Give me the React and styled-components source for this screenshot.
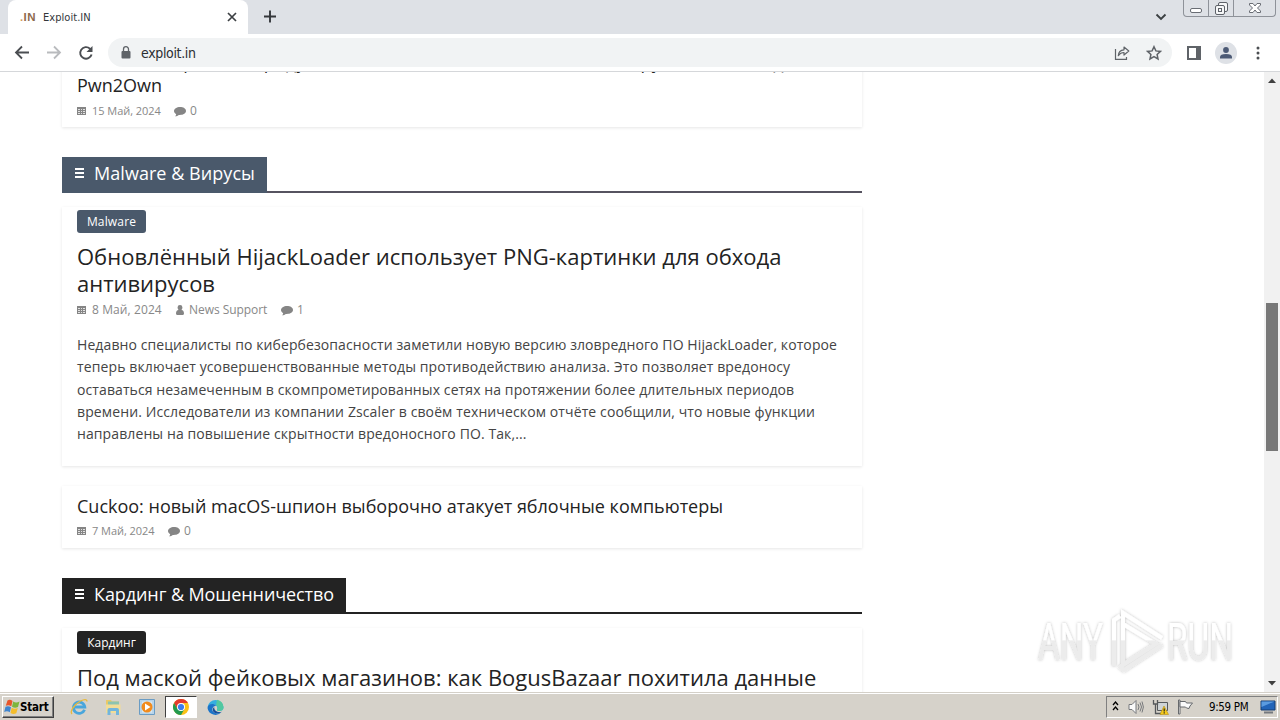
import React from "react";
import styled, { createGlobalStyle } from "styled-components";

const PALETTE = {
  frame: "#dee1e6",
  icon: "#5f6368",
  omnibox: "#f1f3f4",
  malware: "#4a596b",
  malwareLine: "#565360",
  carding: "#232323",
  text: "#232323",
  body: "#444444",
  meta: "#888888",
  taskbar: "#d6d2ca",
};

const UI_FONT = `"DejaVu Sans Condensed", "DejaVu Sans", sans-serif`;

const GlobalStyle = createGlobalStyle`
  * {
    box-sizing: border-box;
  }

  body {
    margin: 0;
    overflow: hidden;
    background: #fff;
  }

  h2, h3, p {
    margin: 0;
    font-weight: 400;
  }

  svg {
    display: block;
    flex: none;
  }
`;

const Screen = styled.div`
  position: relative;
  width: 1280px;
  height: 720px;
  display: flex;
  flex-direction: column;
  overflow: hidden;
  font-family: "Open Sans", "Noto Sans", sans-serif;
`;

/* browser frame */

const TabStrip = styled.div`
  height: 34px;
  flex: none;
  display: flex;
  align-items: flex-start;
  background: ${PALETTE.frame};
`;

const Tab = styled.div`
  width: 240px;
  height: 34px;
  margin-left: 8px;
  padding: 0 11px 0 12px;
  display: flex;
  align-items: center;
  border-radius: 8px 8px 0 0;
  background: #fff;
`;

const Favicon = styled.span`
  width: 23px;
  font: bold 11.5px/34px "Liberation Sans", sans-serif;
  letter-spacing: 0.4px;
  color: #8d6a4c;

  i {
    font-style: normal;
    color: #d49a5a;
  }
`;

const TabTitle = styled.span`
  flex: 1;
  padding-top: 1px;
  font: 11px/34px ${UI_FONT};
  letter-spacing: 0.05px;
  color: #33363a;
`;

const NewTab = styled.div`
  padding: 10px 0 0 16px;
`;

const TabSearch = styled.div`
  margin-left: auto;
  padding: 12px 16px 0 0;
`;

const WindowButtons = styled.div`
  width: 93px;
  height: 17px;
  margin-right: 4px;
  display: flex;
  border: 1px solid #8e9299;
  border-top: 0;
  border-radius: 0 0 4px 4px;
`;

const WindowButton = styled.div`
  width: ${({ $width }) => $width}px;
  height: 16px;
  display: flex;
  justify-content: center;
  border-left: ${({ $first }) => ($first ? 0 : "1px solid #8e9299")};
`;

const Toolbar = styled.div`
  height: 38px;
  flex: none;
  padding: 0 14px 0 14px;
  display: flex;
  align-items: center;
  border-bottom: 1px solid #d5d7da;
  background: #fff;
`;

const NavButtons = styled.div`
  width: 94px;
  display: flex;
  gap: 16px;
`;

const Omnibox = styled.div`
  width: 1064px;
  height: 29px;
  padding: 0 10px;
  display: flex;
  align-items: center;
  border-radius: 15px;
  background: ${PALETTE.omnibox};
`;

const Url = styled.span`
  flex: 1;
  margin-left: 7px;
  font: 14px/18px ${UI_FONT};
  letter-spacing: -0.35px;
  color: #2b2e32;
`;

const OmniboxActions = styled.div`
  display: flex;
  gap: 16px;
`;

const ToolbarActions = styled.div`
  margin-left: auto;
  display: flex;
  align-items: center;
`;

const Avatar = styled.div`
  width: 22px;
  height: 22px;
  margin: 0 13px 0 14px;
  display: flex;
  justify-content: center;
  align-items: center;
  border-radius: 50%;
  background: #dee1e6;
`;

/* page */

const Viewport = styled.div`
  height: 620px;
  flex: none;
  display: flex;
  justify-content: space-between;
  overflow: hidden;
  background: #fff;
`;

const Content = styled.main`
  width: 800px;
  margin-left: 62px;
`;

const Card = styled.article`
  height: ${({ $height }) => $height}px;
  margin-top: ${({ $top }) => $top}px;
  padding: ${({ $pad }) => $pad}px 15px 0;
  background: #fff;
  box-shadow: 0 1px 3px 0 rgba(0, 0, 0, 0.1);
`;

const SmallTitle = styled.h3`
  font-size: 18px;
  line-height: ${({ $leading }) => $leading || 24}px;
  white-space: nowrap;
  color: ${PALETTE.text};
`;

const BigTitle = styled.h3`
  margin-top: 10px;
  font-size: 22px;
  line-height: 27px;
  white-space: nowrap;
  color: ${PALETTE.text};
`;

const Line = styled.span`
  display: block;
  letter-spacing: ${({ $spacing }) => $spacing || 0}px;
`;

const Meta = styled.div`
  height: ${({ $height }) => $height || 16}px;
  display: flex;
  align-items: center;
  font-size: 12px;
  color: ${PALETTE.meta};
`;

const MetaItem = styled.span`
  width: ${({ $width }) => $width}px;
  display: flex;
  align-items: center;
  gap: ${({ $gap }) => $gap || 5}px;
  font-size: ${({ $size }) => $size || 12}px;
  line-height: 16px;
  letter-spacing: ${({ $spacing }) => $spacing || 0}px;
  white-space: nowrap;
`;

const Excerpt = styled.p`
  margin-top: 11px;
  font-size: 14px;
  line-height: 22.3px;
  white-space: nowrap;
  color: ${PALETTE.body};
`;

const SectionHeader = styled.h2`
  height: 36px;
  margin-top: 30px;
  display: flex;
  border-bottom: 2px solid ${({ $line }) => $line};
`;

const SectionLabel = styled.span`
  width: ${({ $width }) => $width}px;
  height: 36px;
  padding: 0 0 4px 12px;
  display: flex;
  align-items: center;
  gap: 9px;
  font-size: 18px;
  line-height: 24px;
  letter-spacing: ${({ $spacing }) => $spacing || 0}px;
  white-space: nowrap;
  color: #fff;
  background: ${({ $color }) => $color};
`;

const Badge = styled.span`
  width: 69px;
  height: 23px;
  display: block;
  border-radius: 3px;
  font-size: 12px;
  line-height: 23px;
  text-align: center;
  letter-spacing: ${({ $spacing }) => $spacing || 0}px;
  color: #fff;
  background: ${({ $color }) => $color};
`;

const Scrollbar = styled.div`
  width: 16px;
  height: 620px;
  padding: 6px 2px;
  display: flex;
  flex-direction: column;
  align-items: center;
  background: #f1f1f1;
`;

const Thumb = styled.div`
  width: 12px;
  height: 148px;
  margin: 220px 0 auto;
  background: #787878;
`;

const Watermark = styled.svg`
  position: absolute;
  left: 1030px;
  top: 600px;
`;

/* taskbar */

const Taskbar = styled.div`
  height: 28px;
  flex: none;
  padding: 2px 2px 1px;
  display: flex;
  align-items: center;
  border-top: 1px solid #d4d0c8;
  box-shadow: inset 0 1px 0 #fff;
  background: ${PALETTE.taskbar};
`;

const StartButton = styled.div`
  width: 52px;
  height: 22px;
  padding-left: 1px;
  display: flex;
  align-items: center;
  border: 1px solid;
  border-color: #fff #404040 #404040 #fff;
  box-shadow: inset -1px -1px 0 #808080;
  font: bold 11.5px/20px ${UI_FONT};
  letter-spacing: -0.2px;
  color: #000;
`;

const QuickLaunch = styled.div`
  margin-left: 8px;
  display: flex;
`;

const LaunchItem = styled.div`
  width: ${({ $active }) => ($active ? 32 : 34)}px;
  height: 22px;
  margin: 0 ${({ $active }) => ($active ? 1 : 0)}px;
  display: flex;
  justify-content: center;
  align-items: center;
  border: ${({ $active }) => ($active ? "1px solid" : 0)};
  border-color: #404040 #fff #fff #404040;
  background: ${({ $active }) => ($active ? "#fff" : "none")};
`;

const Tray = styled.div`
  width: 172px;
  height: 22px;
  margin-left: auto;
  padding: 0 0 0 5px;
  display: flex;
  align-items: center;
  border: 1px solid;
  border-color: #808080 #fff #fff #808080;
`;

const TrayIcons = styled.div`
  width: 97px;
  display: flex;
  align-items: center;
  gap: 8px;
`;

const Clock = styled.span`
  width: 51px;
  font: 11.5px/20px ${UI_FONT};
  letter-spacing: -0.35px;
  white-space: nowrap;
  color: #000;
`;

/* icons */

const CalendarIcon = () => (
  <svg width="10" height="10" viewBox="0 0 10 10">
    <path d="M0 1h9v8H0z" fill="#858585" />
    <path d="M1 3h2v1H1zM4 3h1v1H4zM6 3h2v1H6zM1 5h2v1H1zM4 5h1v1H4zM6 5h2v1H6zM1 7h2v1H1zM4 7h1v1H4zM6 7h2v1H6z" fill="#e2e2e2" />
  </svg>
);

const CommentIcon = () => (
  <svg width="12" height="11" viewBox="0 0 12 11" fill="#858585">
    <path d="M6 1C2.700 1 0 2.700 0 5c0 1.300.900 2.500 2.200 3.200C2.100 9 1.600 9.700 1 10.300 2.600 10.200 3.900 9.600 4.800 8.900 9 9.200 12 7.500 12 5S9.300 1 6 1z" />
  </svg>
);

const UserIcon = () => (
  <svg width="8" height="10" viewBox="0 0 8 10" fill="#858585">
    <path d="M4 0a2.400 2.400 0 0 1 2.400 2.500C6.400 3.700 5.900 4.500 5.400 5 7.200 5.200 8 6.500 8 8.500 8 9.400 7.400 10 6.600 10H1.400C.6 10 0 9.400 0 8.500 0 6.500.8 5.200 2.600 5 2.100 4.500 1.600 3.700 1.600 2.500A2.400 2.400 0 0 1 4 0z" />
  </svg>
);

const BarsIcon = () => (
  <svg width="11" height="12" viewBox="0 0 11 12">
    <path d="M1 2h9M1 6h9M1 10h9" stroke="#fff" strokeWidth="2" />
  </svg>
);

const ArrowIcon = ({ forward }) => (
  <svg width="16" height="16" viewBox="0 0 16 16" fill="none">
    <path
      d={forward ? "M1 7.500h13M8 1.500l6 6-6 6" : "M15 7.500H2M8 1.500l-6 6 6 6"}
      stroke={forward ? "#b9bbbe" : "#4b4e52"}
      strokeWidth="1.800"
    />
  </svg>
);

const ReloadIcon = () => (
  <svg width="16" height="16" viewBox="0 0 16 16">
    <path d="M13.600 9.500A5.800 5.800 0 1 1 12 3.700L13.500 5.200" fill="none" stroke="#4b4e52" strokeWidth="1.900" />
    <path d="M14.500 1v6H8.500z" fill="#4b4e52" />
  </svg>
);

const ScrollArrow = ({ down }) => (
  <svg width="8" height="5" viewBox="0 0 8 5">
    <path d={down ? "M0 0h8L4 4.500z" : "M0 5h8L4 .5z"} fill="#404040" />
  </svg>
);

const WindowsFlag = () => (
  <svg width="16" height="16" viewBox="0 0 16 16">
    <path d="M3.500 1.500Q6 0 8.500 2L7.300 7.200Q4.500 5.500 1.800 6.800z" fill="#e8562a" />
    <path d="M9.200 2.500Q12 4.500 15.500 2.500L14 8Q11 9.700 8 7.700z" fill="#7db53c" />
    <path d="M1.500 7.700Q4.500 6.500 7 8.200L5.800 13.300Q3.300 11.500.2 13z" fill="#3f85cf" />
    <path d="M7.700 8.700Q10.600 10.600 13.800 9L12.300 14.200Q9.400 15.800 6.500 14z" fill="#f4bd2c" />
  </svg>
);

const IEIcon = () => (
  <svg width="18" height="18" viewBox="0 0 18 18" fill="none">
    <path d="M14.500 11.700A5.700 5.700 0 1 1 14.800 9H5" stroke="#49a6dc" strokeWidth="2.800" />
    <path d="M2 16C-.5 13.500 4 6.500 10.500 3 14 1.200 17 .8 17 3.500" stroke="#e8b93b" strokeWidth="1.300" />
  </svg>
);

const ExplorerIcon = () => (
  <svg width="18" height="18" viewBox="0 0 18 18">
    <path d="M2 2h5l1 1.500h7V15H2z" fill="#e9c968" />
    <path d="M4 3.500h11v4H4z" fill="#8cc4b0" />
    <path d="M2 6.500h14.500V15H2z" fill="#f2dd97" />
    <path d="M3.500 17v-5q0-2 2-2h7.500q2 0 2 2v5h-3v-4H6.500v4z" fill="#72b5dc" />
  </svg>
);

const PlayerIcon = () => (
  <svg width="18" height="18" viewBox="0 0 18 18">
    <path d="M1.500 1.500h15v15h-15z" fill="#b7d4ea" stroke="#6a9cc4" />
    <path d="M4 3.500h10v11H4z" fill="#d9e8f2" />
    <circle cx="9" cy="9" r="5.500" fill="#f18b1d" />
    <path d="M7 5.500l5.500 3.500-5.500 3.500z" fill="#fff" />
  </svg>
);

const ChromeIcon = () => (
  <svg width="16" height="16" viewBox="0 0 16 16">
    <circle cx="8" cy="8" r="8" fill="#fbc116" />
    <path d="M1.070 4A8 8 0 0 1 14.930 4H8L4.500 10z" fill="#e33b2e" />
    <path d="M1.070 4A8 8 0 0 0 8 16l3.500-6H4.500z" fill="#229a4f" />
    <circle cx="8" cy="8" r="4" fill="#fff" />
    <circle cx="8" cy="8" r="3.100" fill="#3b7ded" />
  </svg>
);

const EdgeIcon = () => (
  <svg width="17" height="17" viewBox="0 0 17 17">
    <path d="M.6 8A8 8 0 0 1 16.500 8C16.500 11 14.500 12 12 12 10 12 9.500 11 10.300 10 11 7 7 4.500 3.500 6 2 6.600 1 7.400.6 8z" fill="#35aee0" />
    <path d="M10 .7A8 8 0 0 1 16.500 8C16.500 11 14.500 12 12 12 10 12 9.500 11 10.300 10 11 8.500 10.500 7.200 9 6.300z" fill="#52c8a0" />
    <path d="M.5 9C.5 4.500 7.500 4 9 7 6 6.500 4.500 10 6 12.500 7.500 14.500 11.500 15 14.500 13A8 8 0 0 1 .5 9z" fill="#1b74c9" />
    <path d="M7.200 8C5.500 9 5.500 11.500 6.500 13 8.500 15 12 14.500 14.800 12.700 11 14 7 12 7.200 8z" fill="#174f9b" />
  </svg>
);

const SpeakerIcon = () => (
  <svg width="17" height="16" viewBox="0 0 17 16" fill="none" stroke="#77797c">
    <path d="M2 5.500h3L9 1.500v13l-4-4H2z" fill="#fafafa" />
    <path d="M11 5q2 3 0 6M13 3.500q3 4.500 0 9M15 2.500q2.800 5.500 0 11" />
  </svg>
);

const NetworkIcon = () => (
  <svg width="17" height="16" viewBox="0 0 17 16">
    <path d="M5.500 3.500h10v8h-10z" fill="#cfd4d6" stroke="#55585b" />
    <path d="M1.500 1v4h4V1M3.500 5v9.500h6" fill="none" stroke="#55585b" strokeWidth="1.300" />
    <path d="M8 15.500L12 7l4.500 8.500z" fill="#f6ca19" stroke="#b68d14" strokeWidth=".6" />
    <path d="M12.200 9.500v3M12.200 13.300v1.200" stroke="#222" strokeWidth="1.200" />
  </svg>
);

const FlagIcon = () => (
  <svg width="17" height="16" viewBox="0 0 17 16" fill="#fafafa" stroke="#66696c">
    <path d="M1.500 1v14h1.500V1z" />
    <path d="M3 2.500h5.500l1 1.500h6l-2.500 3-1 2.500-2.500-.5-1-1H3z" />
  </svg>
);

const MonitorIcon = () => (
  <svg width="17" height="14" viewBox="0 0 17 14">
    <path d="M1 1h14v9H1z" fill="#2264b8" stroke="#173d70" />
    <path d="M1.500 1.500h13L1.500 7z" fill="#5b9be0" />
    <path d="M4 12.500h9" stroke="#75797e" strokeWidth="2" />
  </svg>
);

const PostMeta = ({ date, dateWidth, size, spacing, author, comments, height }) => (
  <Meta $height={height}>
    <MetaItem $width={dateWidth} $size={size} $spacing={spacing}>
      <CalendarIcon />
      {date}
    </MetaItem>
    {author && (
      <MetaItem $width={105} $spacing={-0.05}>
        <UserIcon />
        {author}
      </MetaItem>
    )}
    <MetaItem $gap={4}>
      <CommentIcon />
      {comments}
    </MetaItem>
  </Meta>
);

const BrowserFrame = () => (
  <>
    <TabStrip>
      <Tab>
        <Favicon>
          <i>.</i>IN
        </Favicon>
        <TabTitle>Exploit.IN</TabTitle>
        <svg width="10" height="10" viewBox="0 0 10 10">
          <path d="M1 1l8 8M9 1L1 9" stroke="#3c4043" strokeWidth="1.700" />
        </svg>
      </Tab>
      <NewTab>
        <svg width="13" height="13" viewBox="0 0 13 13">
          <path d="M6 .5v12M0 6.500h12" stroke="#34373b" strokeWidth="1.900" />
        </svg>
      </NewTab>
      <TabSearch>
        <svg width="12" height="10" viewBox="0 0 12 10" fill="none">
          <path d="M1.500 2.500L6 7l4.500-4.500" stroke="#3c4043" strokeWidth="1.900" />
        </svg>
      </TabSearch>
      <WindowButtons>
        <WindowButton $width={24} $first>
          <svg width="13" height="16" viewBox="0 0 13 16">
            <rect x=".5" y="8.500" width="11" height="4" rx="1.500" fill="#fff" stroke="#696d74" />
          </svg>
        </WindowButton>
        <WindowButton $width={25}>
          <svg width="13" height="16" viewBox="0 0 13 16" fill="#f6f7f8" stroke="#5e6269">
            <rect x="3.500" y="2.500" width="9" height="9" rx="1.500" />
            <rect x=".5" y="5.500" width="9" height="9" rx="1.500" />
            <rect x="3.500" y="8.500" width="3" height="3" />
          </svg>
        </WindowButton>
        <WindowButton $width={42}>
          <svg width="12" height="16" viewBox="0 0 12 16">
            <path d="M.5 3.500h3.500l2 2.500 2-2.500h3.500v1.500L8.500 8l3 3v1.500H8L6 10l-2 2.500H.5V11l3-3-3-3z" fill="#fff" stroke="#696d74" />
          </svg>
        </WindowButton>
      </WindowButtons>
    </TabStrip>
    <Toolbar>
      <NavButtons>
        <ArrowIcon />
        <ArrowIcon forward />
        <ReloadIcon />
      </NavButtons>
      <Omnibox>
        <svg width="16" height="16" viewBox="0 0 16 16">
          <path d="M4.500 6h7q1 0 1 1v5.500q0 1-1 1h-7q-1 0-1-1V7q0-1 1-1z" fill={PALETTE.icon} />
          <path d="M5.500 7V4.200a2.500 2.500 0 0 1 5 0V7" fill="none" stroke={PALETTE.icon} strokeWidth="1.300" />
        </svg>
        <Url>exploit.in</Url>
        <OmniboxActions>
          <svg width="16" height="16" viewBox="0 0 16 16" fill="none" stroke={PALETTE.icon} strokeWidth="1.200">
            <path d="M1.500 4v10.300h11V12" />
            <path d="M4.300 10.700C4.500 7 6.500 5 10 4.800V2l4.800 4-4.800 4V7.500C7.500 7.500 5.700 8.500 4.300 10.700z" strokeLinejoin="round" />
          </svg>
          <svg width="16" height="16" viewBox="0 0 16 16" fill="none" stroke={PALETTE.icon} strokeWidth="1.500">
            <path d="M8 1.700l1.900 4.200 4.600.5-3.400 3.100.9 4.500-4-2.300L4 14l.9-4.500L1.500 6.400l4.600-.5z" />
          </svg>
        </OmniboxActions>
      </Omnibox>
      <ToolbarActions>
        <svg width="14" height="14" viewBox="0 0 14 14">
          <path d="M1 1h12v12H1z" fill="#fff" stroke={PALETTE.icon} strokeWidth="2" />
          <path d="M9 1h4v12H9z" fill={PALETTE.icon} />
        </svg>
        <Avatar>
          <svg width="12" height="12" viewBox="0 0 12 12" fill="#4c5a75">
            <circle cx="6" cy="3" r="2.900" />
            <path d="M0 11.500V10q0-3 6-3t6 3v1.500z" />
          </svg>
        </Avatar>
        <svg width="16" height="16" viewBox="0 0 16 16" fill="#4b4e52">
          <circle cx="8" cy="3" r="1.500" />
          <circle cx="8" cy="8" r="1.500" />
          <circle cx="8" cy="13" r="1.500" />
        </svg>
      </ToolbarActions>
    </Toolbar>
  </>
);

const Page = () => (
  <Viewport>
    <Content>
      <Card $height={76} $top={-21} $pad={0}>
        <SmallTitle $leading={23}>
          <Line $spacing={0.2}>VMware исправила продукты Workstation и Fusion и баги, обнаруженные в ходе</Line>
          <Line>Pwn2Own</Line>
        </SmallTitle>
        <PostMeta date="15 Май, 2024" dateWidth={97} size={11} spacing={-0.05} comments="0" height={28} />
      </Card>

      <SectionHeader $line={PALETTE.malwareLine}>
        <SectionLabel $width={205} $color={PALETTE.malware} $spacing={0.05}>
          <BarsIcon />
          Malware &amp; Вирусы
        </SectionLabel>
      </SectionHeader>
      <Card $height={259} $top={14} $pad={3}>
        <Badge $color={PALETTE.malware} $spacing={0.15}>Malware</Badge>
        <BigTitle>
          <Line $spacing={0.01}>Обновлённый HijackLoader использует PNG-картинки для обхода</Line>
          <Line>антивирусов</Line>
        </BigTitle>
        <PostMeta date="8 Май, 2024" dateWidth={99} spacing={0.1} author="News Support" comments="1" height={26} />
        <Excerpt>
          <Line $spacing={0.095}>Недавно специалисты по кибербезопасности заметили новую версию зловредного ПО HijackLoader, которое</Line>
          <Line $spacing={0.12}>теперь включает усовершенствованные методы противодействию анализа. Это позволяет вредоносу</Line>
          <Line $spacing={0.1}>оставаться незамеченным в скомпрометированных сетях на протяжении более длительных периодов</Line>
          <Line $spacing={0.115}>времени. Исследователи из компании Zscaler в своём техническом отчёте сообщили, что новые функции</Line>
          <Line $spacing={0.1}>направлены на повышение скрытности вредоносного ПО. Так,...</Line>
        </Excerpt>
      </Card>
      <Card $height={62} $top={20} $pad={8}>
        <SmallTitle>Cuckoo: новый macOS-шпион выборочно атакует яблочные компьютеры</SmallTitle>
        <PostMeta date="7 Май, 2024" dateWidth={91} size={11} spacing={-0.05} comments="0" height={26} />
      </Card>

      <SectionHeader $line={PALETTE.carding}>
        <SectionLabel $width={284} $color={PALETTE.carding} $spacing={-0.09}>
          <BarsIcon />
          Кардинг &amp; Мошенничество
        </SectionLabel>
      </SectionHeader>
      <Card $height={259} $top={14} $pad={3}>
        <Badge $color={PALETTE.carding}>Кардинг</Badge>
        <BigTitle>
          <Line>Под маской фейковых магазинов: как BogusBazaar похитила данные</Line>
        </BigTitle>
      </Card>
    </Content>
    <Scrollbar>
      <ScrollArrow />
      <Thumb />
      <ScrollArrow down />
    </Scrollbar>
  </Viewport>
);

const AnyRunMark = () => (
  <Watermark width="210" height="80" viewBox="0 0 210 80">
    <defs>
      <filter id="glow" x="-10%" y="-10%" width="120%" height="120%">
        <feDropShadow dx="0" dy="0" stdDeviation="1.700" floodColor="#000" floodOpacity=".27" />
      </filter>
      <linearGradient id="fade" x1="0" y1="0" x2="0" y2="80" gradientUnits="userSpaceOnUse">
        <stop offset=".5" stopColor="#fff" />
        <stop offset=".51" stopColor="#ececec" />
      </linearGradient>
    </defs>
    <g filter="url(#glow)" fill="url(#fade)" fontFamily="Roboto, sans-serif" fontSize="51">
      <text x="8" y="60" textLength="65" lengthAdjust="spacingAndGlyphs">ANY</text>
      <text x="137" y="60" textLength="66" lengthAdjust="spacingAndGlyphs">RUN</text>
      <g fill="none" stroke="url(#fade)" strokeWidth="4">
        <path d="M93 50V13l39 25" />
        <path d="M84 66V20l6-4" />
        <path d="M93 24l33 20-33 21V48" />
        <path d="M89 66l5 4 38-25" />
      </g>
    </g>
  </Watermark>
);

const DesktopTaskbar = () => (
  <Taskbar>
    <StartButton>
      <WindowsFlag />
      Start
    </StartButton>
    <QuickLaunch>
      <LaunchItem>
        <IEIcon />
      </LaunchItem>
      <LaunchItem>
        <ExplorerIcon />
      </LaunchItem>
      <LaunchItem>
        <PlayerIcon />
      </LaunchItem>
      <LaunchItem $active>
        <ChromeIcon />
      </LaunchItem>
      <LaunchItem>
        <EdgeIcon />
      </LaunchItem>
    </QuickLaunch>
    <Tray>
      <TrayIcons>
        <svg width="7" height="12" viewBox="0 0 7 12" fill="none" stroke="#000" strokeWidth="1.300">
          <path d="M1 4l2.500-3L6 4M1 9l2.500-3L6 9" />
        </svg>
        <SpeakerIcon />
        <NetworkIcon />
        <FlagIcon />
      </TrayIcons>
      <Clock>9:59 PM</Clock>
      <MonitorIcon />
    </Tray>
  </Taskbar>
);

const App = () => (
  <Screen>
    <GlobalStyle />
    <BrowserFrame />
    <Page />
    <DesktopTaskbar />
    <AnyRunMark />
  </Screen>
);

export default App;
